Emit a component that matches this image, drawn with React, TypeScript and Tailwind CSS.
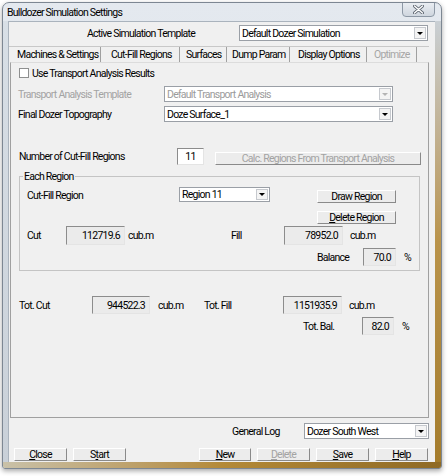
import type { ReactNode } from 'react';

const ui = "font-['Roboto','Liberation_Sans',sans-serif] text-[10.5px] tracking-[-0.75px] leading-[13px] text-black";

function Combo({ value, width, height = 16, disabled = false }: { value: string; width: string; height?: number; disabled?: boolean }) {
  return (
    <div
      className={`${width} flex items-stretch border border-[#9a9fa6] bg-white ${disabled ? 'text-[#9b9b9b]' : ''}`}
      style={{ height }}
    >
      <div className="flex-1 pl-[2px] flex items-center whitespace-nowrap overflow-hidden">{value}</div>
      <div className="w-[12px] m-[1px] border border-[#c6c9ce] bg-[#f4f4f4] flex items-center justify-center">
        <span
          className={`w-0 h-0 border-l-[3px] border-r-[3px] border-t-[3px] border-l-transparent border-r-transparent ${
            disabled ? 'border-t-[#b4b4b4]' : 'border-t-black'
          }`}
        />
      </div>
    </div>
  );
}

function Field({ value, width, height = 18 }: { value: string; width: string; height?: number }) {
  return (
    <div
      className={`${width} border border-t-[#8c8c8c] border-l-[#8c8c8c] border-r-[#e4e4e4] border-b-[#e4e4e4] bg-[#ebebeb] flex items-center justify-end pr-[4px]`}
      style={{ height }}
    >
      {value}
    </div>
  );
}

function Btn({ children, width, disabled = false, height = 13 }: { children: ReactNode; width: string; disabled?: boolean; height?: number }) {
  return (
    <div
      className={`${width} border border-t-white border-l-white border-r-[#8a8a8a] border-b-[#8a8a8a] bg-[#ececec] flex items-center justify-center whitespace-nowrap ${
        disabled ? 'text-[#a3a3a3]' : ''
      }`}
      style={{ height }}
    >
      {children}
    </div>
  );
}

const tabs = [
  { label: 'Machines & Settings', w: 'w-[92px]', pl: 'pl-[8px]' },
  { label: 'Cut-Fill Regions', w: 'w-[79px]', pl: 'pl-[10px]' },
  { label: 'Surfaces', w: 'w-[47px]', pl: 'pl-[6px]' },
  { label: 'Dump Param', w: 'w-[63px]', pl: 'pl-[5px]' },
  { label: 'Display Options', w: 'w-[77px]', pl: 'pl-[8px]' },
  { label: 'Optimize', w: 'w-[50px]', pl: 'pl-[7px]', disabled: true },
];

export default function App() {
  return (
    <div className={`${ui} w-[448px] h-[476px] bg-white pt-[2px] pl-[2px]`}>
      <div className="w-[440px] h-[467px] rounded-t-[7px] rounded-b-[3px] border border-[#7d8793] bg-gradient-to-b from-[#e4e9ef] to-[#d6dde5] shadow-[0_2px_5px_rgba(0,0,0,0.35)] flex flex-col overflow-hidden">
        {/* Title bar */}
        <div className="h-[18px] flex items-center pl-[4px] relative">
          <span className="text-[10.5px]">Bulldozer Simulation Settings</span>
          <div className="absolute right-[6px] top-[-1px] w-[33px] h-[15px] rounded-b-[4px] border border-[#8d98a5] bg-gradient-to-b from-[#e9edf2] to-[#cfd6de] flex items-center justify-center">
            <svg width="11" height="9" viewBox="0 0 11 9">
              <path d="M1.5 1 L9.5 8 M9.5 1 L1.5 8" stroke="#5d6671" strokeWidth="3" strokeLinecap="round" />
              <path d="M1.5 1 L9.5 8 M9.5 1 L1.5 8" stroke="#ffffff" strokeWidth="1.4" strokeLinecap="round" />
            </svg>
          </div>
        </div>

        <div className="flex flex-1">
          <div className="w-[5px] bg-gradient-to-b from-[#d8dfe6] to-[#c9d0d8]" />
          {/* Client area */}
          <div className="flex-1 bg-[#f0f0f0] border-l border-t border-[#aab3bd] flex flex-col">
            {/* Header */}
            <div className="mt-[3px] flex items-center h-[16px]">
              <div className="w-[230px] pl-[78px]">Active Simulation Template</div>
              <Combo value="Default Dozer Simulation" width="w-[189px]" />
            </div>

            {/* Tab strip */}
            <div className="mt-[5px] h-[16px] flex border-t border-[#c8c8c8] w-[420px]">
              {tabs.map((t) => (
                <div
                  key={t.label}
                  className={`${t.w} ${t.pl} h-full flex items-center border-r border-[#a0a0a0] whitespace-nowrap ${
                    t.disabled ? 'text-[#a6a6a6]' : ''
                  }`}
                >
                  {t.label}
                </div>
              ))}
            </div>

            {/* Tab panel */}
            <div className="ml-[1px] w-[419px] h-[356px] border border-[#a0a0a0] border-t-[#dcdcdc] flex flex-col">
              <div className="mt-[5px] ml-[8px] flex items-center h-[10px]">
                <div className="w-[10px] h-[10px] border border-[#8e8f8f] bg-white" />
                <span className="ml-[3px]">Use Transport Analysis Results</span>
              </div>

              <div className="mt-[8px] flex items-center">
                <div className="w-[153px] pl-[7px] text-[#a3a3a3]">Transport Analysis Template</div>
                <Combo value="Default Transport Analysis" width="w-[229px]" disabled />
              </div>
              <div className="mt-[4px] flex items-center">
                <div className="w-[153px] pl-[7px]">Final Dozer Topography</div>
                <Combo value="Doze Surface_1" width="w-[229px]" />
              </div>

              <div className="mt-[26px] flex items-end">
                <div className="w-[166px] pl-[8px] self-center">Number of Cut-Fill Regions</div>
                <div className="w-[27px] h-[17px] border border-t-[#8c8c8c] border-l-[#8c8c8c] border-r-[#e4e4e4] border-b-[#e4e4e4] bg-white flex items-center justify-center">
                  11
                </div>
                <div className="ml-[11px]">
                  <Btn width="w-[206px]" disabled>
                    Calc. Regions From Transport Analysis
                  </Btn>
                </div>
              </div>

              {/* Each Region group */}
              <div className="mt-[11px] ml-[8px] w-[401px] h-[95px] border border-[#c4c4c4] relative flex flex-col">
                <span className="absolute left-[3px] top-[-7px] bg-[#f0f0f0] px-[1px]">Each Region</span>
                <div className="flex items-start">
                  <div className="w-[159px] pl-[7px] mt-[12px]">Cut-Fill Region</div>
                  <div className="mt-[10px]">
                    <Combo value="Region 11" width="w-[91px]" height={15} />
                  </div>
                  <div className="ml-[47px] mt-[13px] flex flex-col gap-[8px]">
                    <Btn width="w-[79px]">Draw Region</Btn>
                    <Btn width="w-[79px]">
                      <span>
                        <span className="underline">D</span>elete Region
                      </span>
                    </Btn>
                  </div>
                </div>
                <div className="mt-[2px] flex items-center h-[19px]">
                  <div className="w-[46px] pl-[7px]">Cut</div>
                  <Field value="112719.6" width="w-[59px]" height={19} />
                  <div className="w-[106px] pl-[3px]">cub.m</div>
                  <div className="w-[53px]">Fill</div>
                  <Field value="78952.0" width="w-[59px]" height={19} />
                  <div className="pl-[7px]">cub.m</div>
                </div>
                <div className="mt-[3px] flex items-center h-[18px]">
                  <div className="w-[343px] pl-[297px]">Balance</div>
                  <Field value="70.0" width="w-[33px]" />
                  <div className="pl-[8px]">%</div>
                </div>
              </div>

              <div className="mt-[25px] flex items-center h-[18px]">
                <div className="w-[81px] pl-[8px]">Tot. Cut</div>
                <Field value="944522.3" width="w-[58px]" />
                <div className="w-[54px] pl-[8px]">cub.m</div>
                <div className="w-[79px]">Tot. Fill</div>
                <Field value="1151935.9" width="w-[59px]" />
                <div className="pl-[7px]">cub.m</div>
              </div>
              <div className="mt-[3px] flex items-center h-[18px]">
                <div className="w-[351px] pl-[292px]">Tot. Bal.</div>
                <Field value="82.0" width="w-[32px]" />
                <div className="pl-[8px]">%</div>
              </div>
            </div>

            {/* General log */}
            <div className="mt-[5px] flex items-center h-[16px]">
              <div className="w-[295px] pl-[223px]">General Log</div>
              <Combo value="Dozer South West" width="w-[125px]" />
            </div>

            {/* Buttons */}
            <div className="mt-[9px] flex items-center pl-[5px]">
              <Btn width="w-[53px]">
                <span>
                  <span className="underline">C</span>lose
                </span>
              </Btn>
              <div className="ml-[6px]">
                <Btn width="w-[53px]">
                  <span>
                    S<span className="underline">t</span>art
                  </span>
                </Btn>
              </div>
              <div className="ml-[73px] flex gap-[6px]">
                <Btn width="w-[52px]">
                  <span>
                    <span className="underline">N</span>ew
                  </span>
                </Btn>
                <Btn width="w-[53px]" disabled>
                  <span>
                    <span className="underline">D</span>elete
                  </span>
                </Btn>
                <Btn width="w-[53px]">
                  <span>
                    <span className="underline">S</span>ave
                  </span>
                </Btn>
                <Btn width="w-[53px]">
                  <span>
                    <span className="underline">H</span>elp
                  </span>
                </Btn>
              </div>
            </div>
          </div>
          <div className="w-[6px] bg-gradient-to-b from-[#c9cfd4] via-[#b9934a] to-[#a47c2c]" />
        </div>
        <div className="h-[6px] bg-gradient-to-r from-[#c9c1a8] via-[#b48a38] to-[#8f6a25]" />
      </div>
    </div>
  );
}
